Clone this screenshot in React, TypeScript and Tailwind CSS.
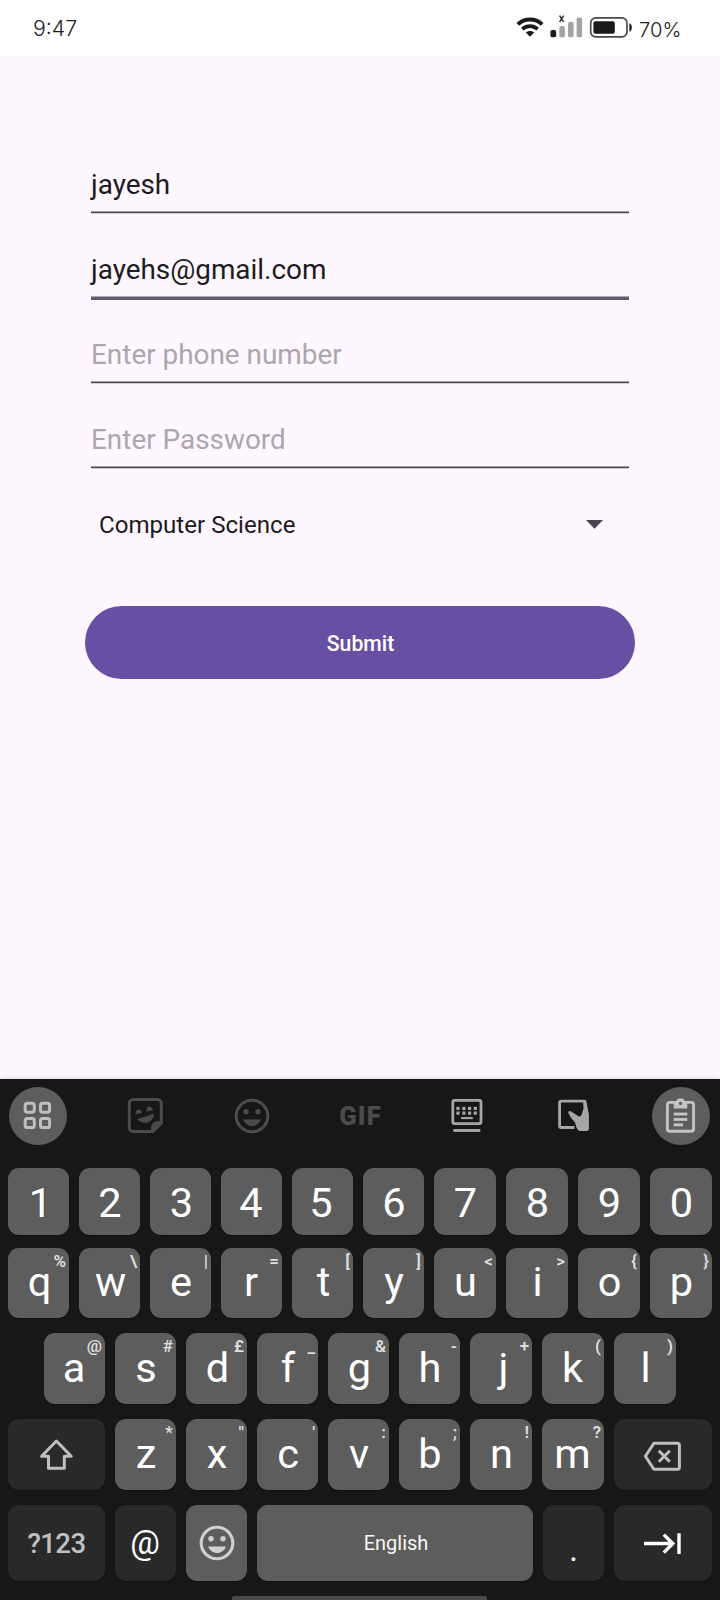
import type { ReactNode } from "react";

type KeyDef = { label: string; hint?: string; w?: string; shift?: string };

const W61 = "w-[61px]";
const W62 = "w-[62px]";

const numberRow: KeyDef[] = [
  { label: "1", shift: "pl-[4px]" },
  { label: "2" },
  { label: "3", shift: "pl-[2px]" },
  { label: "4", shift: "pr-px" },
  { label: "5", shift: "pr-[3px]" },
  { label: "6" },
  { label: "7", w: W62 },
  { label: "8", w: W62 },
  { label: "9", w: W62 },
  { label: "0", w: W62 },
];

const topRow: KeyDef[] = [
  { label: "q", hint: "%", shift: "pl-[2px]" },
  { label: "w", hint: "\\", shift: "pl-[2px]" },
  { label: "e", hint: "|" },
  { label: "r", hint: "=", shift: "pr-px" },
  { label: "t", hint: "[", shift: "pl-[2px]" },
  { label: "y", hint: "]" },
  { label: "u", hint: "<", w: W62 },
  { label: "i", hint: ">", w: W62 },
  { label: "o", hint: "{", w: W62 },
  { label: "p", hint: "}", w: W62 },
];

const homeRow: KeyDef[] = [
  { label: "a", hint: "@", shift: "pr-px" },
  { label: "s", hint: "#" },
  { label: "d", hint: "£", shift: "pl-[2px]" },
  { label: "f", hint: "_" },
  { label: "g", hint: "&", shift: "pl-[2px]" },
  { label: "h", hint: "-" },
  { label: "j", hint: "+", w: W62, shift: "pl-[5px]" },
  { label: "k", hint: "(", w: W62, shift: "pr-px" },
  { label: "l", hint: ")", w: W62 },
];

const bottomRow: KeyDef[] = [
  { label: "z", hint: "*" },
  { label: "x", hint: '"' },
  { label: "c", hint: "'" },
  { label: "v", hint: ":" },
  { label: "b", hint: ";" },
  { label: "n", hint: "!", w: W62 },
  { label: "m", hint: "?", w: W62, shift: "pr-px" },
];

function LetterKey({ label, hint, w = W61, shift = "pl-px", pad = "pt-[11px]" }: KeyDef & { pad?: string }) {
  return (
    <div className={`relative flex h-full shrink-0 justify-center rounded-[11px] bg-[#5d5d5d] shadow-[0_1px_0_#101010] ${w} ${pad} ${shift}`}>
      <span className="text-[41.5px] leading-[48px] text-white">{label}</span>
      {hint && (
        <span className="absolute top-[3px] right-[3px] text-[17px] leading-[20px] font-semibold text-[#dedede]">{hint}</span>
      )}
    </div>
  );
}

function Key({ dark, w, children }: { dark?: boolean; w: string; children: ReactNode }) {
  return (
    <div
      className={`flex h-full shrink-0 justify-center rounded-[11px] shadow-[0_1px_0_#101010] ${w} ${dark ? "bg-[#292929]" : "bg-[#5d5d5d]"}`}
    >
      {children}
    </div>
  );
}

function Field({ text, hint, focused }: { text: string; hint?: boolean; focused?: boolean }) {
  return (
    <div className="flex h-[85px] flex-col justify-between pt-[36px]">
      <span className={`text-[27.9px] leading-[40px] ${hint ? "text-[#aca6ae]" : "text-[#1d1b20]"}`}>{text}</span>
      {focused ? (
        <div className="-mb-px h-[4px] border-t border-[#ada5b6] bg-[#645a70]" />
      ) : (
        <div className="h-[3px] border-t border-b border-t-[#a29da6] border-b-[#d3ccd5] bg-[#49454f]" />
      )}
    </div>
  );
}

function ToolCell({ round, children }: { round?: boolean; children: ReactNode }) {
  return (
    <div className={`flex size-[58px] items-center justify-center rounded-full ${round ? "bg-[#5d5d5d]" : ""}`}>{children}</div>
  );
}

function Smiley({ color }: { color: string }) {
  return (
    <svg width="36" height="36" viewBox="-18 -18 36 36">
      <circle r="15.8" fill="none" stroke={color} strokeWidth="3.1" />
      <circle cx="-6" cy="-4.2" r="2.7" fill={color} />
      <circle cx="6" cy="-4.2" r="2.7" fill={color} />
      <path d="M-8.9 3.4H8.9C7.4 7.4 4 9.9 0 9.9S-7.4 7.4-8.9 3.4Z" fill={color} />
    </svg>
  );
}

function StatusBar() {
  return (
    <header className="flex h-[56px] items-start bg-white font-['Inter',sans-serif] text-[#202020]">
      <span className="ml-[33px] w-[483px] pt-[14px] text-[21.3px] leading-[29px] font-[350]">9:47</span>
      <svg className="mt-[16px]" width="28" height="22" viewBox="0 0 28 22" fill="none" stroke="#1a1a1a" strokeWidth="3.8">
        <path d="M1.8 8.3C8.7 1.9 19.3 1.9 26.2 8.3" />
        <path d="M6.3 13.2C10.8 9.2 17.2 9.2 21.7 13.2" />
        <path d="M14 20.8 9.8 16.6C12.2 14.6 15.8 14.6 18.2 16.6Z" fill="#1a1a1a" stroke="none" />
      </svg>
      <svg className="mt-[14px] ml-[6px]" width="33" height="24" viewBox="0 0 33 24">
        <rect x=".4" y="16" width="5.8" height="7.3" rx="1.9" fill="#1a1a1a" />
        <rect x="9.3" y="12" width="5.6" height="11.3" rx="1.9" fill="#a3a3a3" />
        <rect x="18" y="7.8" width="5.6" height="15.5" rx="1.9" fill="#a3a3a3" />
        <rect x="26.6" y="3.4" width="5.5" height="19.9" rx="1.9" fill="#a3a3a3" />
        <path d="m9.6 1.6 4 6.2m0-6.2-4 6.2" stroke="#1a1a1a" strokeWidth="1.3" />
      </svg>
      <svg className="mt-[16px] ml-[6px]" width="45" height="23" viewBox="0 0 45 23">
        <rect x="1.7" y="1.9" width="36.3" height="19" rx="5" fill="none" stroke="#4a4a4a" strokeWidth="1.7" />
        <rect x="4.4" y="5.2" width="21.4" height="12.5" rx="2" fill="#1a1a1a" />
        <path d="M40.4 7.2c3.2.6 3.2 8 0 8.6Z" fill="#1a1a1a" />
      </svg>
      <span className="ml-[5px] pt-[16px] text-[20.2px] leading-[28px] font-[350]">70%</span>
    </header>
  );
}

function Toolbar() {
  return (
    <div className="flex h-[89px] items-start justify-between pt-[8px] pr-[10px] pl-[9px]">
      <ToolCell round>
        <svg width="58" height="58" viewBox="0 0 58 58" fill="none" stroke="#bfbfbf" strokeWidth="3">
          <rect x="16.2" y="16.2" width="9.1" height="9.1" rx="2.2" />
          <rect x="31.5" y="16.2" width="9.1" height="9.1" rx="2.2" />
          <rect x="16.2" y="31.5" width="9.1" height="9.1" rx="2.2" />
          <rect x="31.5" y="31.5" width="9.1" height="9.1" rx="2.2" />
        </svg>
      </ToolCell>
      <ToolCell>
        <svg width="58" height="58" viewBox="0 0 58 58" fill="#4b4b4b">
          <path d="M37 44.5H17.3a4 4 0 0 1-4-4V16.5a4 4 0 0 1 4-4H41.3a4 4 0 0 1 4 4V36Z" fill="none" stroke="#4b4b4b" strokeWidth="3" />
          <path d="M35 45V41.5C35 37 38 34 42 34H46.5V36.5L37.5 45.5Z" />
          <path d="M19.6 27.3C19.2 24 21 22.2 23 22.4 24.8 22.6 25.7 24.2 26 26Z" />
          <path d="M30.3 24.6C29.9 21.3 31.6 19.4 33.7 19.5 35.5 19.7 36.6 21.5 36.9 23.2Z" />
          <path d="M21.4 32 37.9 26.7C37.9 31.5 34.5 35.7 29.3 35.7 25.8 35.7 22.8 34.2 21.4 32Z" />
        </svg>
      </ToolCell>
      <ToolCell>
        <Smiley color="#4b4b4b" />
      </ToolCell>
      <ToolCell>
        <span className="pl-[2px] text-[25.5px] leading-[30px] font-black tracking-[1.2px] text-[#4b4b4b]">GIF</span>
      </ToolCell>
      <ToolCell>
        <svg width="58" height="58" viewBox="0 0 58 58" fill="#a6a6a6">
          <rect x="14.8" y="13.4" width="28.2" height="23.2" rx="1.8" fill="none" stroke="#a6a6a6" strokeWidth="2.8" />
          {[18.4, 24.3, 30, 35.7].map((x) => (
            <g key={x}>
              <rect x={x} y="19.8" width="3.2" height="3.2" />
              <rect x={x} y="24.5" width="3.2" height="3.2" />
            </g>
          ))}
          <rect x="23" y="30" width="11.8" height="2.1" />
          <rect x="15.3" y="42" width="27" height="2.9" />
        </svg>
      </ToolCell>
      <ToolCell>
        <svg width="58" height="58" viewBox="0 0 58 58" fill="#a6a6a6">
          <path d="M29.5 40.5H16.2a1.6 1.6 0 0 1-1.6-1.6V15.8a1.6 1.6 0 0 1 1.6-1.6H38.6" fill="none" stroke="#a6a6a6" strokeWidth="2.8" />
          <path d="M38 12.8H39.3C40.6 12.8 41.2 13.3 41.4 14.4L43.9 27.5V41.5C43.9 43.2 43 44 41.5 44H36.5C32.5 44 31.4 41 30.6 37.2 30 34.5 27.5 33 25.5 29.8L23.4 26.2C22.8 24.7 24.2 23.3 25.6 24.2L33.5 29.2C35.2 30 36.3 28.7 36.8 27L38.5 21.5Z" />
        </svg>
      </ToolCell>
      <ToolCell round>
        <svg width="58" height="58" viewBox="0 0 58 58" fill="#c4c4c4">
          <rect x="15.4" y="15.4" width="26.2" height="28.8" rx="2.5" fill="none" stroke="#c4c4c4" strokeWidth="2.9" />
          <path d="M21.7 14.2H24.2C24.7 12.5 26.4 11.3 28.5 11.3S32.3 12.5 32.8 14.2H35.3V21.4H21.7Z" />
          <circle cx="28.5" cy="16.4" r="1.6" fill="#5d5d5d" />
          <rect x="21.7" y="25.6" width="13.6" height="2.9" />
          <rect x="21.7" y="31" width="13.6" height="2.9" />
          <rect x="21.7" y="36.4" width="9.3" height="2.9" />
        </svg>
      </ToolCell>
    </div>
  );
}

function Keyboard() {
  return (
    <section className="flex h-[521px] flex-col bg-[#171717] shadow-[0_-1px_6px_rgba(0,0,0,0.12)]">
      <Toolbar />
      <div className="flex h-[67px] gap-[10px] pl-[8px]">
        {numberRow.map((k) => (
          <LetterKey key={k.label} {...k} />
        ))}
      </div>
      <div className="mt-[13px] flex h-[70px] gap-[10px] pl-[8px]">
        {topRow.map((k) => (
          <LetterKey key={k.label} {...k} pad="pt-[10px]" />
        ))}
      </div>
      <div className="mt-[15px] flex h-[71px] gap-[10px] pl-[44px]">
        {homeRow.map((k) => (
          <LetterKey key={k.label} {...k} pad="pt-[11px]" />
        ))}
      </div>
      <div className="mt-[15px] flex h-[71px] gap-[10px] pl-[8px]">
        <Key dark w="w-[97px]">
          <svg width="97" height="71" viewBox="0 0 97 71" fill="none" stroke="#bfbfbf" strokeWidth="3" strokeLinejoin="round">
            <path d="M48.4 22 63.2 37.2H56.3V49.2H40.5V37.2H33.6Z" />
          </svg>
        </Key>
        {bottomRow.map((k) => (
          <LetterKey key={k.label} {...k} pad="pt-[11px]" />
        ))}
        <Key dark w="w-[98px]">
          <svg width="98" height="71" viewBox="0 0 98 71" fill="none" stroke="#bfbfbf" strokeWidth="3" strokeLinejoin="round">
            <path d="M39.9 24.2H63.4a2 2 0 0 1 2 2V48.2a2 2 0 0 1-2 2H39.9L31.4 37.2Z" />
            <path d="m44.8 31.8 11 11m0-11-11 11" />
          </svg>
        </Key>
      </div>
      <div className="mt-[15px] flex h-[76px] gap-[10px] pl-[8px]">
        <Key dark w="w-[97px]">
          <span className="pt-[19px] text-[27.5px] leading-[40px] font-medium tracking-[-0.6px] text-[#c0c0c0]">?123</span>
        </Key>
        <Key dark w={W61}>
          <span className="pt-[18px] pr-px text-[33px] leading-[40px] text-white">@</span>
        </Key>
        <Key w={W61}>
          <div className="pt-[20px]">
            <Smiley color="#d0d0d0" />
          </div>
        </Key>
        <Key w="w-[276px]">
          <span className="pt-[18px] pl-[2px] text-[20px] leading-[40px] text-[#f7f7f7]">English</span>
        </Key>
        <Key dark w={W61}>
          <span className="pt-[25px] text-[33px] leading-[40px] text-white">.</span>
        </Key>
        <Key dark w="w-[98px]">
          <svg width="98" height="76" viewBox="0 0 98 76" fill="none" stroke="#ffffff" strokeWidth="3.4">
            <path d="M30 38.5H59M49.8 29.6 58.8 38.5 49.8 47.6M65 28.3V49" />
          </svg>
        </Key>
      </div>
      <div className="mt-[15px] ml-[232px] h-[4px] w-[255px] rounded-t-[2px] bg-[#4a4a4a]" />
    </section>
  );
}

export default function App() {
  return (
    <div className="flex h-[1600px] w-[720px] flex-col overflow-hidden bg-[#fef7ff] font-['Roboto',sans-serif]">
      <StatusBar />
      <main className="flex h-[1023px] flex-col pt-[73px]">
        <div className="mx-[91px] flex flex-col">
          <Field text="jayesh" />
          <Field text="jayehs@gmail.com" focused />
          <Field text="Enter phone number" hint />
          <Field text="Enter Password" hint />
        </div>
        <div className="mt-[36px] mr-[117px] ml-[99px] flex h-[40px] items-center justify-between">
          <span className="text-[24.1px] leading-[40px] text-[#1d1b20]">Computer Science</span>
          <svg className="-mt-[2px]" width="17" height="9" viewBox="0 0 17 9">
            <path d="M0 0H17L8.5 8.7Z" fill="#49454f" />
          </svg>
        </div>
        <button className="mx-[85px] mt-[61px] flex h-[73px] items-center justify-center rounded-full bg-[#6750a3] pt-[2px] pl-px text-[21.2px] leading-[30px] font-medium text-white">
          Submit
        </button>
      </main>
      <Keyboard />
    </div>
  );
}
